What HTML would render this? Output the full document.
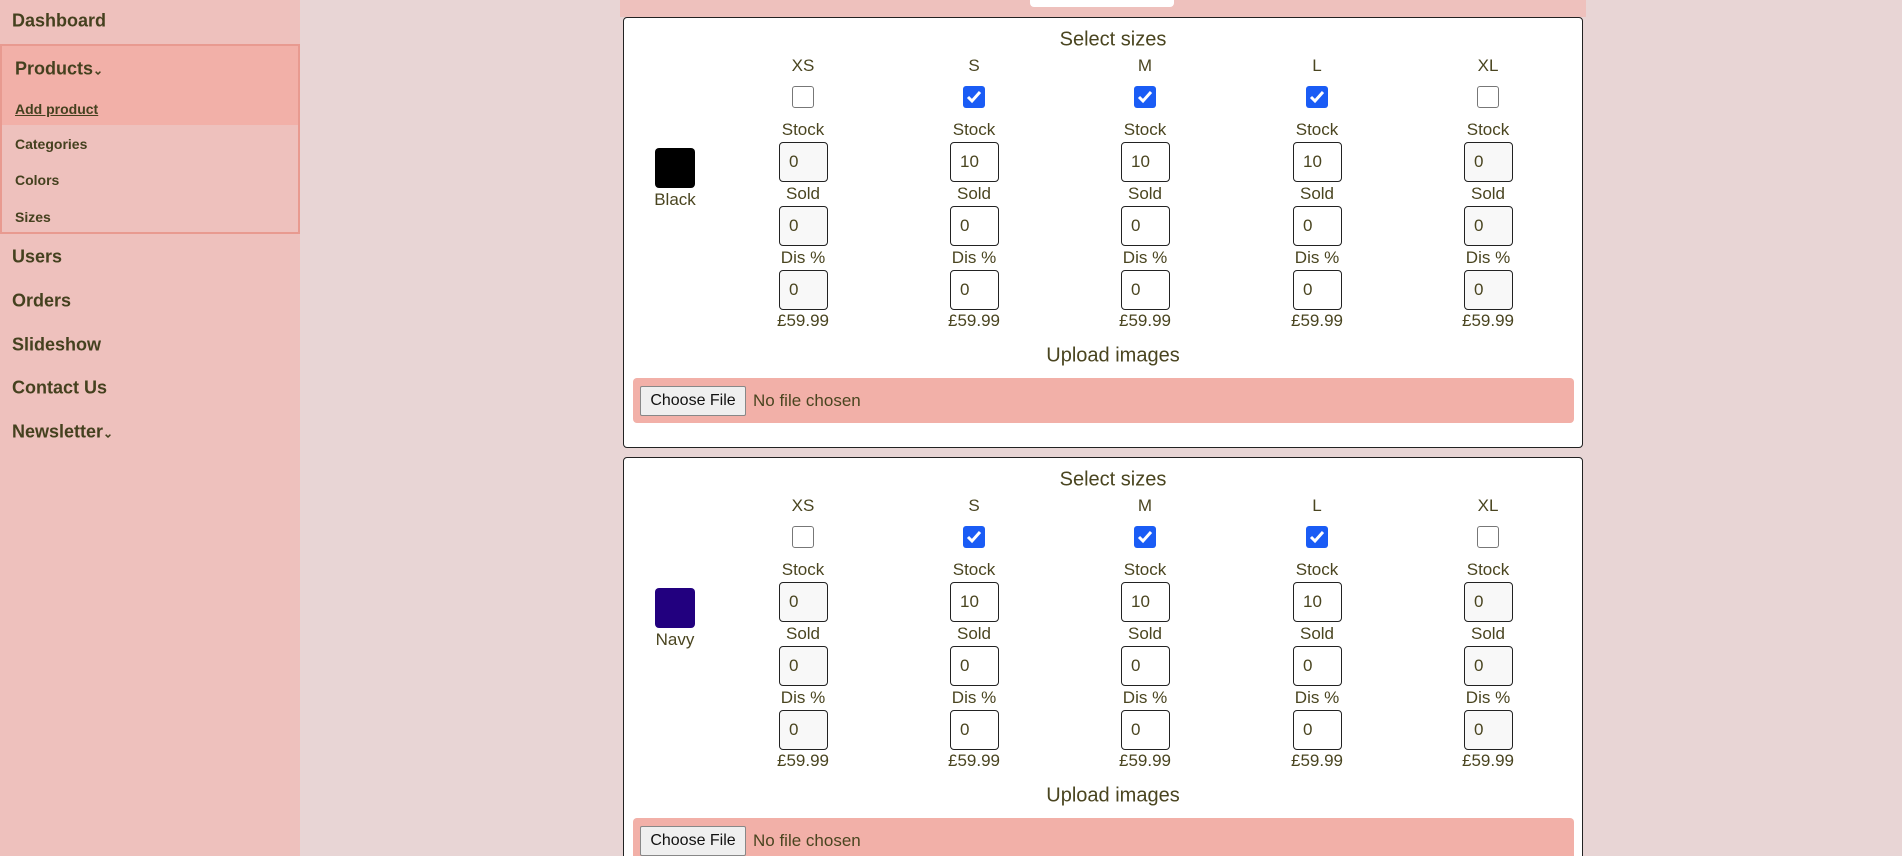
<!DOCTYPE html>
<html><head><meta charset="utf-8"><style>
*{box-sizing:border-box;margin:0;padding:0}
html,body{width:1902px;height:856px;overflow:hidden}
body{background:#e8d5d5;font-family:"Liberation Sans",sans-serif;color:#4a4520}
#root{position:relative;width:1902px;height:856px;overflow:hidden;background:#e8d5d5}
.side{position:absolute;left:0;top:0;width:300px;height:856px;background:#eec1bd}
.nav{position:absolute;left:12px;font-weight:bold;font-size:18px;color:#45411f;transform:translateY(-50%)}
.box{position:absolute;left:0;top:44px;width:300px;height:190px;border:2px solid #e89a90}
.boxh{position:absolute;left:0;top:0;width:296px;height:79px;background:#f2b0a8}
.sub{position:absolute;left:13px;font-weight:bold;font-size:14px;color:#45411f;transform:translateY(-50%)}
.wrap{position:absolute;left:620px;top:0;width:966px;height:17px;background:#eec1bd}
.tab{position:absolute;left:1030px;top:0;width:144px;height:7px;background:#fff;border-radius:0 0 4px 4px}
.card{position:absolute;left:623px;width:960px;height:431px;background:#fff;border:1px solid #222;border-radius:4px}
.c{position:absolute;transform:translate(-50%,-50%);white-space:nowrap;font-size:17px}
.t{font-size:20px}
.in{position:absolute;width:49px;height:40px;border:1px solid #222;border-radius:4px;background:#fff;font-size:17px;line-height:38px;padding-left:9px}
.in.d{background:#f8f8f8}
.cb{position:absolute;width:22px;height:22px;border-radius:3px}
.cb.off{border:1px solid #777;background:#fff}
.cb.on{background:#1a5cf5}
.bar{position:absolute;left:9px;top:360px;width:941px;height:45px;background:#f2b0a8;border-radius:4px}
.btn{position:absolute;left:7px;top:8px;width:106px;height:30px;border:1px solid #888;border-radius:2px;background:#efefef;font-size:16px;color:#111;text-align:center;line-height:28px}
.nf{position:absolute;left:120px;top:0;line-height:45px;font-size:17px;color:#4a4520}
.sw{position:absolute;left:31px;top:130px;width:40px;height:40px;border-radius:4px}
</style></head><body><div id="root">
<div class="side">
<div class="nav" style="top:21px">Dashboard</div>
<div class="box"><div class="boxh"></div>
<div class="sub" style="top:23px;font-size:18px">Products<span style="font-size:12px">⌄</span></div>
<div class="sub" style="top:63px;text-decoration:underline">Add product</div>
<div class="sub" style="top:98px">Categories</div>
<div class="sub" style="top:134px">Colors</div>
<div class="sub" style="top:171px">Sizes</div>
</div>
<div class="nav" style="top:257px">Users</div>
<div class="nav" style="top:301px">Orders</div>
<div class="nav" style="top:345px">Slideshow</div>
<div class="nav" style="top:388px">Contact Us</div>
<div class="nav" style="top:432px">Newsletter<span style="font-size:12px">⌄</span></div>
</div>
<div class="wrap"></div><div class="tab"></div>

<div class="card" style="top:17px">
<div class="c t" style="left:489px;top:22px">Select sizes</div>
<div class="sw" style="background:#000"></div><div class="c" style="left:51px;top:182px">Black</div>
<div style="position:absolute;left:179px;top:0"><div class="c" style="left:0;top:48px">XS</div><div class="cb off" style="left:-11px;top:68px"></div><div class="c" style="left:0;top:112px">Stock</div><div class="in d" style="left:-24px;top:124px">0</div><div class="c" style="left:0;top:176px">Sold</div><div class="in d" style="left:-24px;top:188px">0</div><div class="c" style="left:0;top:240px">Dis %</div><div class="in d" style="left:-24px;top:252px">0</div><div class="c" style="left:0;top:303px">£59.99</div></div>
<div style="position:absolute;left:350px;top:0"><div class="c" style="left:0;top:48px">S</div><div class="cb on" style="left:-11px;top:68px"><svg width="22" height="22"><path d="M5 11l4 4 8-9" stroke="#fff" stroke-width="3" fill="none"/></svg></div><div class="c" style="left:0;top:112px">Stock</div><div class="in" style="left:-24px;top:124px">10</div><div class="c" style="left:0;top:176px">Sold</div><div class="in" style="left:-24px;top:188px">0</div><div class="c" style="left:0;top:240px">Dis %</div><div class="in" style="left:-24px;top:252px">0</div><div class="c" style="left:0;top:303px">£59.99</div></div>
<div style="position:absolute;left:521px;top:0"><div class="c" style="left:0;top:48px">M</div><div class="cb on" style="left:-11px;top:68px"><svg width="22" height="22"><path d="M5 11l4 4 8-9" stroke="#fff" stroke-width="3" fill="none"/></svg></div><div class="c" style="left:0;top:112px">Stock</div><div class="in" style="left:-24px;top:124px">10</div><div class="c" style="left:0;top:176px">Sold</div><div class="in" style="left:-24px;top:188px">0</div><div class="c" style="left:0;top:240px">Dis %</div><div class="in" style="left:-24px;top:252px">0</div><div class="c" style="left:0;top:303px">£59.99</div></div>
<div style="position:absolute;left:693px;top:0"><div class="c" style="left:0;top:48px">L</div><div class="cb on" style="left:-11px;top:68px"><svg width="22" height="22"><path d="M5 11l4 4 8-9" stroke="#fff" stroke-width="3" fill="none"/></svg></div><div class="c" style="left:0;top:112px">Stock</div><div class="in" style="left:-24px;top:124px">10</div><div class="c" style="left:0;top:176px">Sold</div><div class="in" style="left:-24px;top:188px">0</div><div class="c" style="left:0;top:240px">Dis %</div><div class="in" style="left:-24px;top:252px">0</div><div class="c" style="left:0;top:303px">£59.99</div></div>
<div style="position:absolute;left:864px;top:0"><div class="c" style="left:0;top:48px">XL</div><div class="cb off" style="left:-11px;top:68px"></div><div class="c" style="left:0;top:112px">Stock</div><div class="in d" style="left:-24px;top:124px">0</div><div class="c" style="left:0;top:176px">Sold</div><div class="in d" style="left:-24px;top:188px">0</div><div class="c" style="left:0;top:240px">Dis %</div><div class="in d" style="left:-24px;top:252px">0</div><div class="c" style="left:0;top:303px">£59.99</div></div>
<div class="c t" style="left:489px;top:338px">Upload images</div>
<div class="bar"><div class="btn">Choose File</div><div class="nf">No file chosen</div></div>
</div>

<div class="card" style="top:457px">
<div class="c t" style="left:489px;top:22px">Select sizes</div>
<div class="sw" style="background:#22007f"></div><div class="c" style="left:51px;top:182px">Navy</div>
<div style="position:absolute;left:179px;top:0"><div class="c" style="left:0;top:48px">XS</div><div class="cb off" style="left:-11px;top:68px"></div><div class="c" style="left:0;top:112px">Stock</div><div class="in d" style="left:-24px;top:124px">0</div><div class="c" style="left:0;top:176px">Sold</div><div class="in d" style="left:-24px;top:188px">0</div><div class="c" style="left:0;top:240px">Dis %</div><div class="in d" style="left:-24px;top:252px">0</div><div class="c" style="left:0;top:303px">£59.99</div></div>
<div style="position:absolute;left:350px;top:0"><div class="c" style="left:0;top:48px">S</div><div class="cb on" style="left:-11px;top:68px"><svg width="22" height="22"><path d="M5 11l4 4 8-9" stroke="#fff" stroke-width="3" fill="none"/></svg></div><div class="c" style="left:0;top:112px">Stock</div><div class="in" style="left:-24px;top:124px">10</div><div class="c" style="left:0;top:176px">Sold</div><div class="in" style="left:-24px;top:188px">0</div><div class="c" style="left:0;top:240px">Dis %</div><div class="in" style="left:-24px;top:252px">0</div><div class="c" style="left:0;top:303px">£59.99</div></div>
<div style="position:absolute;left:521px;top:0"><div class="c" style="left:0;top:48px">M</div><div class="cb on" style="left:-11px;top:68px"><svg width="22" height="22"><path d="M5 11l4 4 8-9" stroke="#fff" stroke-width="3" fill="none"/></svg></div><div class="c" style="left:0;top:112px">Stock</div><div class="in" style="left:-24px;top:124px">10</div><div class="c" style="left:0;top:176px">Sold</div><div class="in" style="left:-24px;top:188px">0</div><div class="c" style="left:0;top:240px">Dis %</div><div class="in" style="left:-24px;top:252px">0</div><div class="c" style="left:0;top:303px">£59.99</div></div>
<div style="position:absolute;left:693px;top:0"><div class="c" style="left:0;top:48px">L</div><div class="cb on" style="left:-11px;top:68px"><svg width="22" height="22"><path d="M5 11l4 4 8-9" stroke="#fff" stroke-width="3" fill="none"/></svg></div><div class="c" style="left:0;top:112px">Stock</div><div class="in" style="left:-24px;top:124px">10</div><div class="c" style="left:0;top:176px">Sold</div><div class="in" style="left:-24px;top:188px">0</div><div class="c" style="left:0;top:240px">Dis %</div><div class="in" style="left:-24px;top:252px">0</div><div class="c" style="left:0;top:303px">£59.99</div></div>
<div style="position:absolute;left:864px;top:0"><div class="c" style="left:0;top:48px">XL</div><div class="cb off" style="left:-11px;top:68px"></div><div class="c" style="left:0;top:112px">Stock</div><div class="in d" style="left:-24px;top:124px">0</div><div class="c" style="left:0;top:176px">Sold</div><div class="in d" style="left:-24px;top:188px">0</div><div class="c" style="left:0;top:240px">Dis %</div><div class="in d" style="left:-24px;top:252px">0</div><div class="c" style="left:0;top:303px">£59.99</div></div>
<div class="c t" style="left:489px;top:338px">Upload images</div>
<div class="bar"><div class="btn">Choose File</div><div class="nf">No file chosen</div></div>
</div>
</div></body></html>
